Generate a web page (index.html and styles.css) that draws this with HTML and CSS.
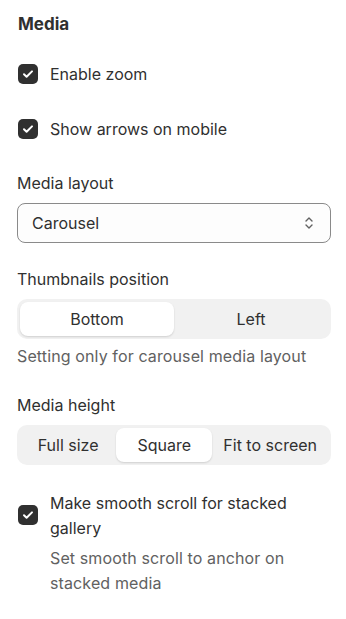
FILE: index.html
```html
<!DOCTYPE html>
<html>
<head>
<meta charset="utf-8">
<link rel="stylesheet" href="styles.css">
</head>
<body>
<div class="panel">
  <h2 class="title">Media</h2>

  <label class="check row-1">
    <span class="box"><svg viewBox="0 0 20 20" width="20" height="20"><path d="M6 10.3l2.6 2.5L14 7.4" fill="none" stroke="#fff" stroke-width="2" stroke-linecap="round" stroke-linejoin="round"/></svg></span>
    <span class="check-text">Enable zoom</span>
  </label>

  <label class="check row-2">
    <span class="box"><svg viewBox="0 0 20 20" width="20" height="20"><path d="M6 10.3l2.6 2.5L14 7.4" fill="none" stroke="#fff" stroke-width="2" stroke-linecap="round" stroke-linejoin="round"/></svg></span>
    <span class="check-text">Show arrows on mobile</span>
  </label>

  <div class="field f-layout">
    <div class="label">Media layout</div>
    <div class="select">
      <span>Carousel</span>
      <svg class="chev" viewBox="0 0 12 20" width="12" height="20"><path d="M3 8l3-3 3 3M3 12l3 3 3-3" fill="none" stroke="#616161" stroke-width="1.4" stroke-linecap="round" stroke-linejoin="round"/></svg>
    </div>
  </div>

  <div class="field f-thumbs">
    <div class="label">Thumbnails position</div>
    <div class="seg">
      <div class="seg-item active">Bottom</div>
      <div class="seg-item">Left</div>
    </div>
    <div class="help">Setting only for carousel media layout</div>
  </div>

  <div class="field f-height">
    <div class="label">Media height</div>
    <div class="seg seg-3">
      <div class="seg-item">Full size</div>
      <div class="seg-item active">Square</div>
      <div class="seg-item">Fit to screen</div>
    </div>
  </div>

  <label class="check check-multi">
    <span class="box"><svg viewBox="0 0 20 20" width="20" height="20"><path d="M6 10.3l2.6 2.5L14 7.4" fill="none" stroke="#fff" stroke-width="2" stroke-linecap="round" stroke-linejoin="round"/></svg></span>
    <span class="check-body">
      <span class="check-text">Make smooth scroll for stacked gallery</span>
      <span class="help">Set smooth scroll to anchor on stacked media</span>
    </span>
  </label>
</div>
</body>
</html>
```
FILE: styles.css
```css
html, body {
  margin: 0;
  padding: 0;
  background: #ffffff;
}
body {
  font-family: Inter, "Noto Sans", sans-serif;
  font-size: 16px;
  color: #303030;
}
.panel {
  display: flex;
  flex-direction: column;
  padding: 12px 15px 0 17px;
}
.title {
  margin: 0;
  font-size: 17px;
  font-weight: 650;
  line-height: 24px;
  padding-left: 1px;
}
.check {
  display: flex;
  align-items: center;
  gap: 12px;
  line-height: 24px;
  padding-left: 1px;
}
.row-1 { margin-top: 26px; }
.row-2 { margin-top: 31px; }
.box {
  flex: none;
  width: 20px;
  height: 20px;
  border-radius: 5px;
  background: #303030;
  display: flex;
}
.label {
  line-height: 24px;
  margin-bottom: 8px;
}
.f-layout { margin-top: 30px; }
.f-thumbs { margin-top: 24px; }
.f-height { margin-top: 25px; }
.select {
  height: 40px;
  box-sizing: border-box;
  border: 1px solid #8a8a8a;
  border-radius: 8px;
  background: #fdfdfd;
  display: flex;
  align-items: center;
  justify-content: space-between;
  padding: 0 15px 0 14px;
}
.chev { display: block; }
.seg {
  display: flex;
  background: #f1f1f1;
  border-radius: 10px;
  padding: 3px;
  height: 40px;
  box-sizing: border-box;
}
.seg-item {
  flex: 1 1 0;
  display: flex;
  align-items: center;
  justify-content: center;
  padding: 0 11px;
  border-radius: 8px;
  white-space: nowrap;
}
.seg-item.active {
  background: #ffffff;
  box-shadow: 0 1px 2px rgba(0,0,0,0.14);
}
.help {
  color: #616161;
  line-height: 24px;
  margin-top: 5px;
  letter-spacing: 0.12px;
}
.check-multi {
  margin-top: 26px;
  align-items: flex-start;
}
.check-multi .box { margin-top: 14px; }
.check-body {
  display: flex;
  flex-direction: column;
  line-height: 25px;
}
.check-body .help {
  line-height: 25px;
  margin-top: 5px;
}
```
